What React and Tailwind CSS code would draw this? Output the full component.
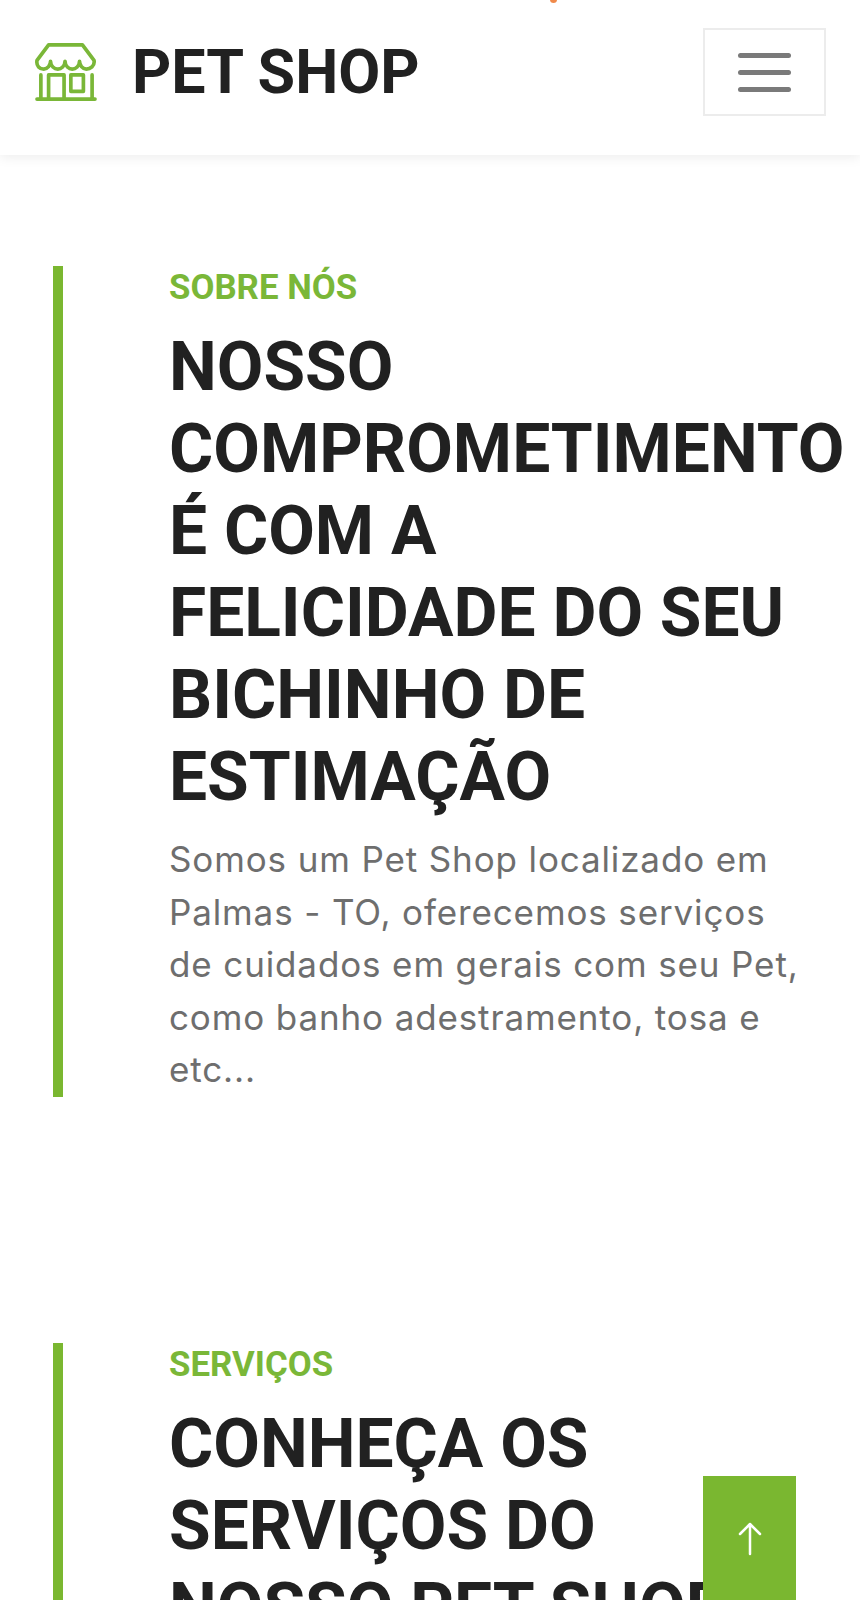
import React from "react";

const roboto = { fontFamily: "Roboto, sans-serif" };

function StoreIcon() {
  return (
    <svg width="62" height="58" viewBox="0 0 64 60" fill="none" stroke="#7ab738" strokeWidth="3.8" strokeLinecap="round" strokeLinejoin="round">
      <path d="M14 2H49L61 18C62 24 57 27 53 27C49 27 46 23 46 19C46 24 42 27 38.5 27C35 27 31 24 31 19C31 24 27 27 23.5 27C20 27 16 24 16 19C16 23 13 27 9 27C5 27 1 24 2 18Z" />
      <path d="M6 33V56M59 33V56M2 58H62" />
      <path d="M14 57V33H30V57" />
      <rect x="37" y="33" width="13" height="17" />
    </svg>
  );
}

function Section({ label, title, children, className }) {
  return (
    <section className={`ml-[53px] flex ${className}`}>
      <div className="w-[10px] shrink-0 bg-[#7ab730]" />
      <div className="ml-[106px] w-[640px] shrink-0">
        <div className="text-[34.8px] leading-[42px] font-bold text-[#7ab738]" style={roboto}>{label}</div>
        <h2 className="mt-[18px] text-[67.7px] leading-[82px] font-bold whitespace-nowrap text-[#212121]" style={roboto}>
          {title.map((t) => (<div key={t}>{t}</div>))}
        </h2>
        {children}
      </div>
    </section>
  );
}

export default function App() {
  return (
    <div className="relative h-[1600px] w-[860px] overflow-hidden bg-white">
      <div className="absolute top-[-4px] left-[550px] size-[7px] rounded-full bg-[#f08a4b]" />
      <header className="flex h-[155px] items-center justify-between pr-[34px] pb-[11px] pl-[35px] shadow-[0_2px_12px_rgba(0,0,0,0.08)]">
        <div className="flex items-center">
          <StoreIcon />
          <span className="ml-[35px] text-[61px] leading-none font-bold text-[#212121]" style={roboto}>PET SHOP</span>
        </div>
        <button className="flex h-[88px] w-[123px] flex-col items-center justify-center gap-[12px] border-2 border-[#ececec]">
          <span className="h-[5px] w-[53px] rounded-full bg-[#7a7a7a]" />
          <span className="h-[5px] w-[53px] rounded-full bg-[#7a7a7a]" />
          <span className="h-[5px] w-[53px] rounded-full bg-[#7a7a7a]" />
        </button>
      </header>

      <main>
        <Section label="SOBRE NÓS" title={["NOSSO", "COMPROMETIMENTO", "É COM A", "FELICIDADE DO SEU", "BICHINHO DE", "ESTIMAÇÃO"]} className="mt-[111px]">
          <p className="mt-[15px] pb-[1px] text-[35px] leading-[52.6px] tracking-[0.87px] text-[#6e6e6e]" style={{ fontFamily: "Inter, sans-serif" }}>
            <span className="block whitespace-nowrap">Somos um Pet Shop localizado em</span>
            <span className="block whitespace-nowrap">Palmas - TO, oferecemos serviços</span>
            <span className="block whitespace-nowrap">de cuidados em gerais com seu Pet,</span>
            <span className="block whitespace-nowrap">como banho adestramento, tosa e</span>
            <span className="block whitespace-nowrap">etc...</span>
          </p>
        </Section>
        <Section label="SERVIÇOS" title={["CONHEÇA OS", "SERVIÇOS DO", "NOSSO PET SHOP"]} className="mt-[246px]" />
      </main>

      <button className="absolute top-[1476px] left-[703px] flex h-[124px] w-[93px] items-start justify-center bg-[#7ab730] pt-[46px]">
        <svg width="24" height="34" viewBox="0 0 24 34" fill="none" stroke="#fff" strokeWidth="2.5" strokeLinecap="round" strokeLinejoin="round">
          <path d="M12 2V32M2 12L12 2L22 12" />
        </svg>
      </button>
    </div>
  );
}
